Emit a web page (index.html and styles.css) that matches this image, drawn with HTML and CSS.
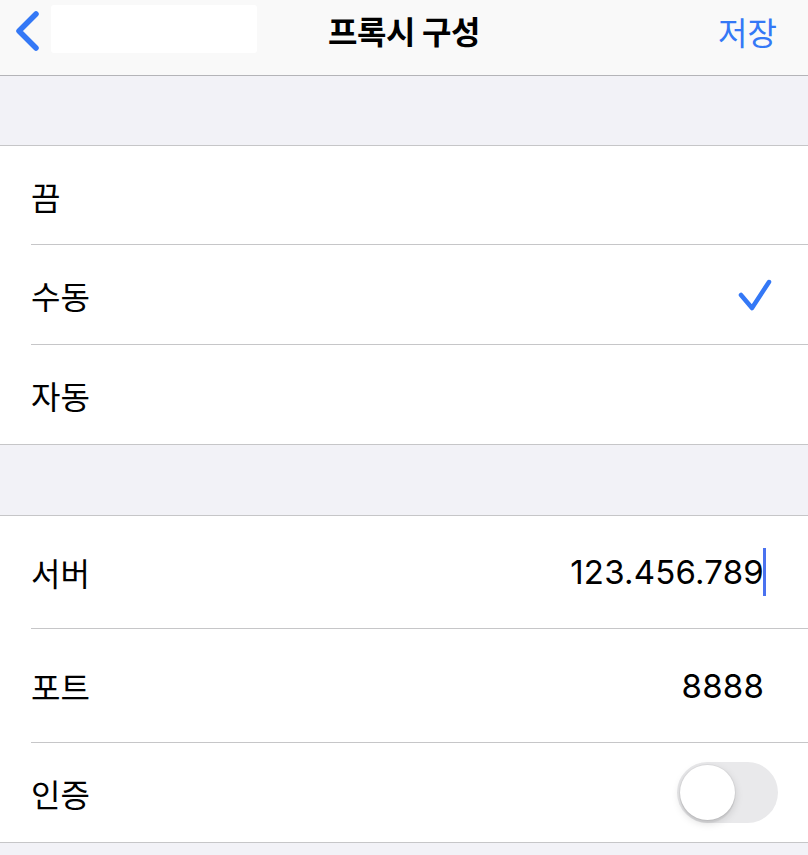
FILE: index.html
```html
<!DOCTYPE html>
<html lang="ko">
<head>
<meta charset="utf-8">
<title>프록시 구성</title>
<link rel="stylesheet" href="styles.css">
</head>
<body>
<header class="nav">
  <div class="nav-left">
    <svg class="chevron" width="30" height="44" viewBox="0 0 30 44">
      <path d="M23 5 L6 22 L23 39" fill="none" stroke="#3478f6" stroke-width="5.5" stroke-linecap="round" stroke-linejoin="round"/>
    </svg>
    <div class="mask"></div>
  </div>
  <h1 class="title">프록시 구성</h1>
  <div class="nav-right">저장</div>
</header>

<div class="gap gap-top"></div>

<section class="group">
  <div class="row r1 first"><span class="label">끔</span></div>
  <div class="row r1"><span class="label">수동</span>
    <svg class="check" width="36" height="34" viewBox="0 0 36 34">
      <path d="M4 17 L15 30 L32 4" fill="none" stroke="#3478f6" stroke-width="4.5" stroke-linecap="round" stroke-linejoin="round"/>
    </svg>
  </div>
  <div class="row r1 last"><span class="label">자동</span></div>
</section>

<div class="gap gap-mid"></div>

<section class="group">
  <div class="row r2"><span class="label">서버</span><span class="value">123.456.789<span class="caret"></span></span></div>
  <div class="row r2 tall"><span class="label">포트</span><span class="value">8888</span></div>
  <div class="row r3"><span class="label">인증</span><span class="toggle"><span class="knob"></span></span></div>
</section>

<div class="gap gap-bottom"></div>
</body>
</html>
```

FILE: styles.css
```css
* { box-sizing: border-box; }
html, body { margin: 0; padding: 0; }
body {
  width: 808px;
  height: 855px;
  overflow: hidden;
  background: #f2f2f7;
  font-family: "Inter", "Noto Sans CJK KR", sans-serif;
  color: #000;
}
.nav {
  height: 76px;
  background: #f9f9f9;
  border-bottom: 1px solid #b4b4b8;
  display: flex;
  align-items: center;
  justify-content: space-between;
  position: relative;
}
.nav-left {
  display: flex;
  align-items: flex-start;
  height: 76px;
  padding-left: 13px;
}
.chevron { margin-top: 9px; }
.mask {
  width: 206px;
  height: 48px;
  background: #fff;
  border-radius: 3px;
  margin-top: 5px;
  margin-left: 8px;
}
.title {
  position: absolute;
  left: 0;
  right: 0;
  top: 0;
  margin: 0;
  height: 75px;
  line-height: 66px;
  text-align: center;
  font-size: 32px;
  font-weight: 700;
  letter-spacing: -0.5px;
  pointer-events: none;
}
.nav-right {
  color: #3478f6;
  font-size: 32px;
  margin-right: 31px;
  margin-top: -13px;
}
.gap-top { height: 69px; }
.gap-mid { height: 70px; }
.group {
  background: #fff;
  border-top: 1px solid #c6c6c8;
  border-bottom: 1px solid #c6c6c8;
  padding-left: 31px;
}
.row {
  display: flex;
  align-items: center;
  justify-content: space-between;
  padding-right: 44px;
  border-bottom: 1px solid #c6c6c8;
  font-size: 32px;
}
.row:last-child { border-bottom: none; }
.r1 { height: 100px; padding-top: 1px; }
.r1.first { height: 99px; }
.r1.last { height: 99px; }
.r2 { height: 113px; }
.r2.tall { height: 114px; }
.r3 { height: 99px; padding-right: 30px; }
.check { margin-right: -9px; }
.value { position: relative; font-size: 33px; letter-spacing: 0.2px; }
.caret {
  position: absolute;
  right: -2px;
  top: -4px;
  width: 3px;
  height: 48px;
  background: #4a72f0;
}
.toggle {
  width: 101px;
  height: 61px;
  border-radius: 31px;
  background: #e9e9eb;
  position: relative;
  display: block;
}
.knob {
  position: absolute;
  left: 3px;
  top: 3px;
  width: 55px;
  height: 55px;
  border-radius: 50%;
  background: #fff;
  box-shadow: 0 3px 8px rgba(0,0,0,0.15), 0 3px 1px rgba(0,0,0,0.06), 0 0 0 1px rgba(0,0,0,0.04);
}
```
